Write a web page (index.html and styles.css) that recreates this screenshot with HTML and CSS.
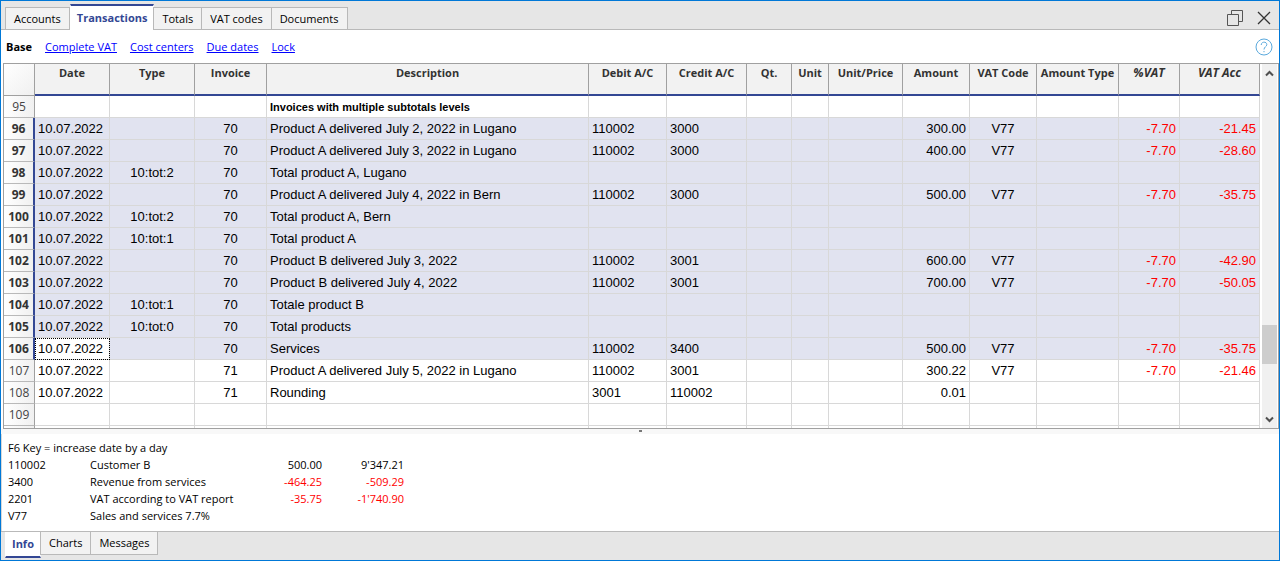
FILE: index.html
```html
<!DOCTYPE html>
<html lang="en">
<head>
    <meta charset="UTF-8">
    <meta name="viewport" content="width=device-width, initial-scale=1.0">
    <title>Transactions</title>
    <link rel="stylesheet" href="styles.css">
</head>
<body>
    <div class="window">
        <header class="top-bar">
            <div class="tabs">
                <button class="tab">Accounts</button>
                <button class="tab active">Transactions</button>
                <button class="tab">Totals</button>
                <button class="tab">VAT codes</button>
                <button class="tab">Documents</button>
            </div>
            <div class="window-buttons">
                <button class="icon-btn" aria-label="Restore">
                    <svg width="16" height="16" viewBox="0 0 16 16" fill="none" stroke="#555"><path d="M4.500 4.500V.5H15.500V11.500H11.500M.5 4.500H11.500V15.500H.5Z"/></svg>
                </button>
                <button class="icon-btn" aria-label="Close">
                    <svg width="14" height="14" viewBox="0 0 14 14" fill="none" stroke="#333" stroke-width="1.300"><path d="M1 1L13 13M13 1L1 13"/></svg>
                </button>
            </div>
        </header>

        <nav class="views">
            <span class="current">Base</span>
            <a href="#complete-vat">Complete VAT</a>
            <a href="#cost-centers">Cost centers</a>
            <a href="#due-dates">Due dates</a>
            <a href="#lock">Lock</a>
            <button class="icon-btn help" aria-label="Help">
                <svg width="18" height="18" viewBox="0 0 18 18" fill="none" stroke="#5aa9dd"><circle cx="9" cy="9" r="8"/><path d="M6.200 7C6.200 3.300 11.800 3.300 11.800 6.600C11.800 8.800 9 8.800 9 11.500M9 13V14.200"/></svg>
            </button>
        </nav>

        <main class="grid-pane">
            <div class="grid">
                <table>
                    <colgroup>
                        <col class="c-num"><col class="c-date"><col class="c-type"><col class="c-invoice"><col>
                        <col class="c-debit"><col class="c-credit"><col class="c-qt"><col class="c-unit"><col class="c-price">
                        <col class="c-amount"><col class="c-amount"><col class="c-amtype"><col class="c-vat"><col class="c-credit">
                    </colgroup>
                    <thead>
                        <tr>
                            <td></td><th>Date</th><th>Type</th><th>Invoice</th><th>Description</th>
                            <th>Debit A/C</th><th>Credit A/C</th><th>Qt.</th><th>Unit</th><th>Unit/Price</th>
                            <th>Amount</th><th>VAT Code</th><th>Amount Type</th><th><i>%VAT</i></th><th><i>VAT Acc</i></th>
                        </tr>
                    </thead>
                    <tbody>
                        <tr><th>95</th><td></td><td></td><td></td><td class="section">Invoices with multiple subtotals levels</td><td></td><td></td><td></td><td></td><td></td><td></td><td></td><td></td><td></td><td></td></tr>
                        <tr class="selected"><th>96</th><td>10.07.2022</td><td></td><td>70</td><td>Product A delivered July 2, 2022 in Lugano</td><td>110002</td><td>3000</td><td></td><td></td><td></td><td>300.00</td><td>V77</td><td></td><td>-7.70</td><td>-21.45</td></tr>
                        <tr class="selected"><th>97</th><td>10.07.2022</td><td></td><td>70</td><td>Product A delivered July 3, 2022 in Lugano</td><td>110002</td><td>3000</td><td></td><td></td><td></td><td>400.00</td><td>V77</td><td></td><td>-7.70</td><td>-28.60</td></tr>
                        <tr class="selected"><th>98</th><td>10.07.2022</td><td>10:tot:2</td><td>70</td><td>Total product A, Lugano</td><td></td><td></td><td></td><td></td><td></td><td></td><td></td><td></td><td></td><td></td></tr>
                        <tr class="selected"><th>99</th><td>10.07.2022</td><td></td><td>70</td><td>Product A delivered July 4, 2022 in Bern</td><td>110002</td><td>3000</td><td></td><td></td><td></td><td>500.00</td><td>V77</td><td></td><td>-7.70</td><td>-35.75</td></tr>
                        <tr class="selected"><th>100</th><td>10.07.2022</td><td>10:tot:2</td><td>70</td><td>Total product A, Bern</td><td></td><td></td><td></td><td></td><td></td><td></td><td></td><td></td><td></td><td></td></tr>
                        <tr class="selected"><th>101</th><td>10.07.2022</td><td>10:tot:1</td><td>70</td><td>Total product A</td><td></td><td></td><td></td><td></td><td></td><td></td><td></td><td></td><td></td><td></td></tr>
                        <tr class="selected"><th>102</th><td>10.07.2022</td><td></td><td>70</td><td>Product B delivered July 3, 2022</td><td>110002</td><td>3001</td><td></td><td></td><td></td><td>600.00</td><td>V77</td><td></td><td>-7.70</td><td>-42.90</td></tr>
                        <tr class="selected"><th>103</th><td>10.07.2022</td><td></td><td>70</td><td>Product B delivered July 4, 2022</td><td>110002</td><td>3001</td><td></td><td></td><td></td><td>700.00</td><td>V77</td><td></td><td>-7.70</td><td>-50.05</td></tr>
                        <tr class="selected"><th>104</th><td>10.07.2022</td><td>10:tot:1</td><td>70</td><td>Totale product B</td><td></td><td></td><td></td><td></td><td></td><td></td><td></td><td></td><td></td><td></td></tr>
                        <tr class="selected"><th>105</th><td>10.07.2022</td><td>10:tot:0</td><td>70</td><td>Total products</td><td></td><td></td><td></td><td></td><td></td><td></td><td></td><td></td><td></td><td></td></tr>
                        <tr class="selected"><th>106</th><td class="focused">10.07.2022</td><td></td><td>70</td><td>Services</td><td>110002</td><td>3400</td><td></td><td></td><td></td><td>500.00</td><td>V77</td><td></td><td>-7.70</td><td>-35.75</td></tr>
                        <tr><th>107</th><td>10.07.2022</td><td></td><td>71</td><td>Product A delivered July 5, 2022 in Lugano</td><td>110002</td><td>3001</td><td></td><td></td><td></td><td>300.22</td><td>V77</td><td></td><td>-7.70</td><td>-21.46</td></tr>
                        <tr><th>108</th><td>10.07.2022</td><td></td><td>71</td><td>Rounding</td><td>3001</td><td>110002</td><td></td><td></td><td></td><td>0.01</td><td></td><td></td><td></td><td></td></tr>
                        <tr><th>109</th><td></td><td></td><td></td><td></td><td></td><td></td><td></td><td></td><td></td><td></td><td></td><td></td><td></td><td></td></tr>
                        <tr><th></th><td></td><td></td><td></td><td></td><td></td><td></td><td></td><td></td><td></td><td></td><td></td><td></td><td></td><td></td></tr>
                    </tbody>
                </table>
            </div>
            <div class="scrollbar">
                <button class="icon-btn" aria-label="Scroll up">
                    <svg width="9" height="7" viewBox="0 0 9 7" fill="none" stroke="#505050" stroke-width="2"><path d="M1 5.500L4.500 2L8 5.500"/></svg>
                </button>
                <div class="track">
                    <div class="thumb"></div>
                </div>
                <button class="icon-btn" aria-label="Scroll down">
                    <svg width="9" height="7" viewBox="0 0 9 7" fill="none" stroke="#505050" stroke-width="2"><path d="M1 1.500L4.500 5L8 1.500"/></svg>
                </button>
            </div>
        </main>

        <div class="splitter"><span></span></div>

        <section class="info">
            <p>F6 Key = increase date by a day</p>
            <table>
                <tr><td>110002</td><td>Customer B</td><td>500.00</td><td>9'347.21</td></tr>
                <tr><td>3400</td><td>Revenue from services</td><td class="neg">-464.25</td><td class="neg">-509.29</td></tr>
                <tr><td>2201</td><td>VAT according to VAT report</td><td class="neg">-35.75</td><td class="neg">-1'740.90</td></tr>
                <tr><td>V77</td><td>Sales and services 7.7%</td><td></td><td></td></tr>
            </table>
        </section>

        <footer class="bottom-bar">
            <button class="tab active">Info</button>
            <button class="tab">Charts</button>
            <button class="tab">Messages</button>
        </footer>
    </div>
</body>
</html>
```
FILE: styles.css
```css
* {
    box-sizing: border-box;
}

body {
    margin: 0;
    font-family: "Open Sans", "Noto Sans", sans-serif;
    font-size: 11px;
    color: #000;
}

button {
    font: inherit;
    color: inherit;
}

.window {
    display: flex;
    flex-direction: column;
    height: 100vh;
    border: 1px solid #0078d7;
    background: #fff;
    overflow: hidden;
}

.icon-btn {
    display: flex;
    align-items: center;
    justify-content: center;
    padding: 0;
    border: none;
    background: none;
}

/* Tabs */
.top-bar {
    display: flex;
    justify-content: space-between;
    height: 29px;
    padding: 0 8px 0 4px;
    background: #e6e6e6;
    box-shadow: inset 0 -1px #b9b9b9;
}

.tabs {
    display: flex;
    align-items: flex-end;
}

.tab {
    height: 23px;
    margin: 0 0 0 -1px;
    padding: 0 8px;
    border: 1px solid #b9b9b9;
    background: #f2f2f2;
    line-height: 20px;
    white-space: nowrap;
}

.tab:first-child {
    margin-left: 0;
}

.tab.active {
    padding: 0 6px;
    border-color: #fff;
    background: #fff;
    color: #334794;
    font-weight: bold;
}

.top-bar .active {
    height: 26px;
    margin-left: 0;
    border-top: 2px solid #334794;
    border-bottom: none;
}

.window-buttons {
    display: flex;
    align-items: center;
    gap: 14px;
    padding-top: 5px;
}

/* View links */
.views {
    display: flex;
    align-items: center;
    gap: 13px;
    height: 33px;
    padding: 0 6px 0 5px;
}

.views a {
    color: #00f;
}

.current {
    font-weight: bold;
}

.help {
    margin-left: auto;
}

/* Grid */
.grid-pane {
    display: flex;
    flex: 1;
    min-height: 0;
    margin: 0 0 0 2px;
    border: 1px solid #a0a0a0;
    gap: 2px;
}

.grid {
    flex: 1;
    overflow: hidden;
}

.grid table {
    width: 100%;
    table-layout: fixed;
    border-collapse: separate;
    border-spacing: 0;
}

.c-num { width: 31px; }
.c-date { width: 75px; }
.c-type { width: 85px; }
.c-invoice { width: 72px; }
.c-debit { width: 78px; }
.c-credit { width: 80px; }
.c-qt { width: 45px; }
.c-unit { width: 37px; }
.c-price { width: 74px; }
.c-amount { width: 67px; }
.c-amtype { width: 82px; }
.c-vat { width: 61px; }

.grid thead th,
.grid thead td {
    height: 32px;
    padding: 0;
    border-right: 1px solid #a0a0a0;
    border-bottom: 2px solid #334794;
    background: #f2f2f2;
    color: #333;
    line-height: 18px;
    vertical-align: top;
    white-space: nowrap;
}

.grid thead td {
    border-bottom: 1px solid #a0a0a0;
    background: linear-gradient(135deg, #fff, #f0f0f0);
}

.grid thead i {
    font-size: 12px;
}

.grid tbody td {
    height: 22px;
    padding: 0 3px;
    border-right: 1px solid #d8d8d8;
    border-bottom: 1px solid #d8d8d8;
    font-family: "Liberation Sans", Arial, sans-serif;
    font-size: 13px;
    line-height: 20px;
    white-space: nowrap;
}

.grid tbody th {
    height: 22px;
    padding: 0;
    border-right: 1px solid #a0a0a0;
    border-bottom: 1px solid #b9b9b9;
    background: linear-gradient(90deg, #fff, #f0f0f0);
    color: #444;
    font-size: 12px;
    font-weight: normal;
    line-height: 20px;
}

.grid td:nth-child(3),
.grid td:nth-child(4),
.grid td:nth-child(12) {
    text-align: center;
}

.grid td:nth-child(11),
.grid td:nth-child(14),
.grid td:nth-child(15) {
    text-align: right;
}

.grid td:nth-child(14),
.grid td:nth-child(15),
.neg {
    color: #f00;
}

.grid tbody .section {
    font-size: 11px;
    font-weight: bold;
}

.grid .selected td {
    background: #e1e3f0;
}

.grid .selected th {
    border-right: 2px solid #334794;
    color: #333;
    font-weight: bold;
}

.grid .selected .focused {
    background: #fff;
    outline: 1px dotted #000;
    outline-offset: -1px;
}

/* Scrollbar */
.scrollbar {
    display: flex;
    flex-direction: column;
    width: 15px;
    margin-right: 1px;
    background: #f0f0f0;
}

.scrollbar .icon-btn {
    height: 18px;
}

.track {
    display: flex;
    flex-direction: column;
    justify-content: flex-end;
    flex: 1;
    padding-bottom: 46px;
}

.thumb {
    height: 39px;
    background: #cdcdcd;
}

.splitter {
    display: flex;
    justify-content: center;
    height: 5px;
    padding-top: 1px;
    background: #f8f8f8;
}

.splitter span {
    width: 3px;
    height: 2px;
    background: #777;
}

/* Info panel */
.info {
    padding: 5px 6px 7px;
    border-left: 1px solid #d8d8d8;
    line-height: 17px;
}

.info p {
    margin: 0;
}

.info table {
    border-spacing: 0;
}

.info td {
    width: 82px;
    padding: 0;
}

.info td:nth-child(2) {
    width: 150px;
    white-space: nowrap;
}

.info td:nth-child(n+3) {
    text-align: right;
}

.bottom-bar {
    display: flex;
    align-items: flex-start;
    height: 29px;
    padding-left: 4px;
    border-top: 1px solid #b9b9b9;
    background: #e6e6e6;
}

.bottom-bar .tab {
    border-top: none;
}

.bottom-bar .active {
    height: 26px;
    border-bottom: 2px solid #334794;
}
```
